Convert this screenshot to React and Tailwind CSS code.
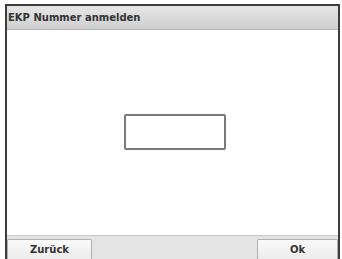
import React from 'react';

export default function App() {
  return (
    <div className="h-[259px] w-[342px] bg-white pl-[5px] pr-[2px] pt-[4px] font-['DejaVu_Sans',Verdana,sans-serif]">
      <div className="flex h-full flex-col border-x-2 border-t-2 border-[#3c3c3c]">
        {/* title bar */}
        <div className="flex h-[24px] items-center border-b border-[#b4b4b4] bg-gradient-to-b from-[#e6e6e6] to-[#cfcfcf] pl-[1px] text-[10px] font-bold text-[#333]">
          EKP Nummer anmelden
        </div>

        {/* content */}
        <div className="flex flex-1 items-start justify-center bg-white pt-[84px]">
          <div className="ml-[5px] h-[36px] w-[102px] rounded-[2px] border-2 border-[#7a7a7a] bg-white" />
        </div>

        {/* bottom bar */}
        <div className="flex h-[24px] items-end justify-between border-t border-[#c8c8c8] bg-[#e4e4e4] pt-[3px]">
          <button className="flex h-full w-[85px] items-center justify-center rounded-t-[2px] border border-b-0 border-[#b0b0b0] bg-gradient-to-b from-[#fafafa] to-[#ececec] text-[10px] font-bold text-[#333]">
            Zurück
          </button>
          <button className="flex h-full w-[81px] items-center justify-center rounded-t-[2px] border border-b-0 border-[#b0b0b0] bg-gradient-to-b from-[#fafafa] to-[#ececec] text-[10px] font-bold text-[#333]">
            Ok
          </button>
        </div>
      </div>
    </div>
  );
}
